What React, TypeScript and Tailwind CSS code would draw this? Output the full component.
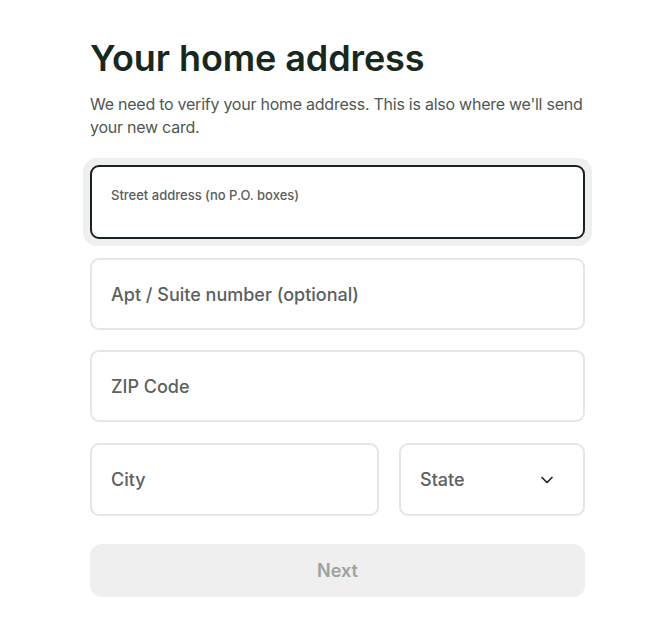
import { ChevronDown } from "lucide-react";

export default function App() {
  return (
    <div className="min-h-[641px] w-full bg-white font-['Inter',sans-serif]">
      <div className="w-[495px] ml-[90px] pt-[36px]">
        <h1 className="text-[36px] leading-[44px] font-semibold tracking-[-0.1px] text-[#17291f]">
          Your home address
        </h1>
        <p className="mt-[13px] text-[16px] leading-[23px] tracking-[-0.25px] text-[#4f5853]">
          We need to verify your home address. This is also where we'll send your new card.
        </p>

        <div className="mt-[26px] flex flex-col gap-[20px]">
          <div className="-m-[7px] p-[7px] rounded-[14px] bg-[#efefee]">
            <div className="h-[74px] rounded-[9px] border-2 border-[#17241d] bg-white px-[19px] pt-[15px]">
              <span className="text-[13px] leading-[18px] font-medium text-[#585e5b]">Street address (no P.O. boxes)</span>
            </div>
          </div>

          <div className="-mt-[1px] h-[72px] rounded-[9px] border-2 border-[#e6e6e6] bg-white px-[19px] flex items-center">
            <span className="text-[18px] font-medium text-[#5b615e]">Apt / Suite number (optional)</span>
          </div>

          <div className="h-[72px] rounded-[9px] border-2 border-[#e6e6e6] bg-white px-[19px] flex items-center">
            <span className="text-[18px] font-medium text-[#5b615e]">ZIP Code</span>
          </div>

          <div className="mt-[1px] flex gap-[20px]">
            <div className="w-[289px] h-[73px] rounded-[9px] border-2 border-[#e6e6e6] bg-white px-[19px] flex items-center">
              <span className="text-[18px] font-medium text-[#5b615e]">City</span>
            </div>
            <div className="flex-1 h-[73px] rounded-[9px] border-2 border-[#e6e6e6] bg-white pl-[19px] pr-[26px] flex items-center justify-between">
              <span className="text-[18px] font-medium text-[#5b615e]">State</span>
              <ChevronDown className="w-[20px] h-[20px] text-[#1d2621]" strokeWidth={2} />
            </div>
          </div>
        </div>

        <button className="mt-[28px] w-full h-[53px] rounded-[12px] bg-[#efefef] text-[18px] font-semibold text-[#9ba39f]">
          Next
        </button>
      </div>
    </div>
  );
}
